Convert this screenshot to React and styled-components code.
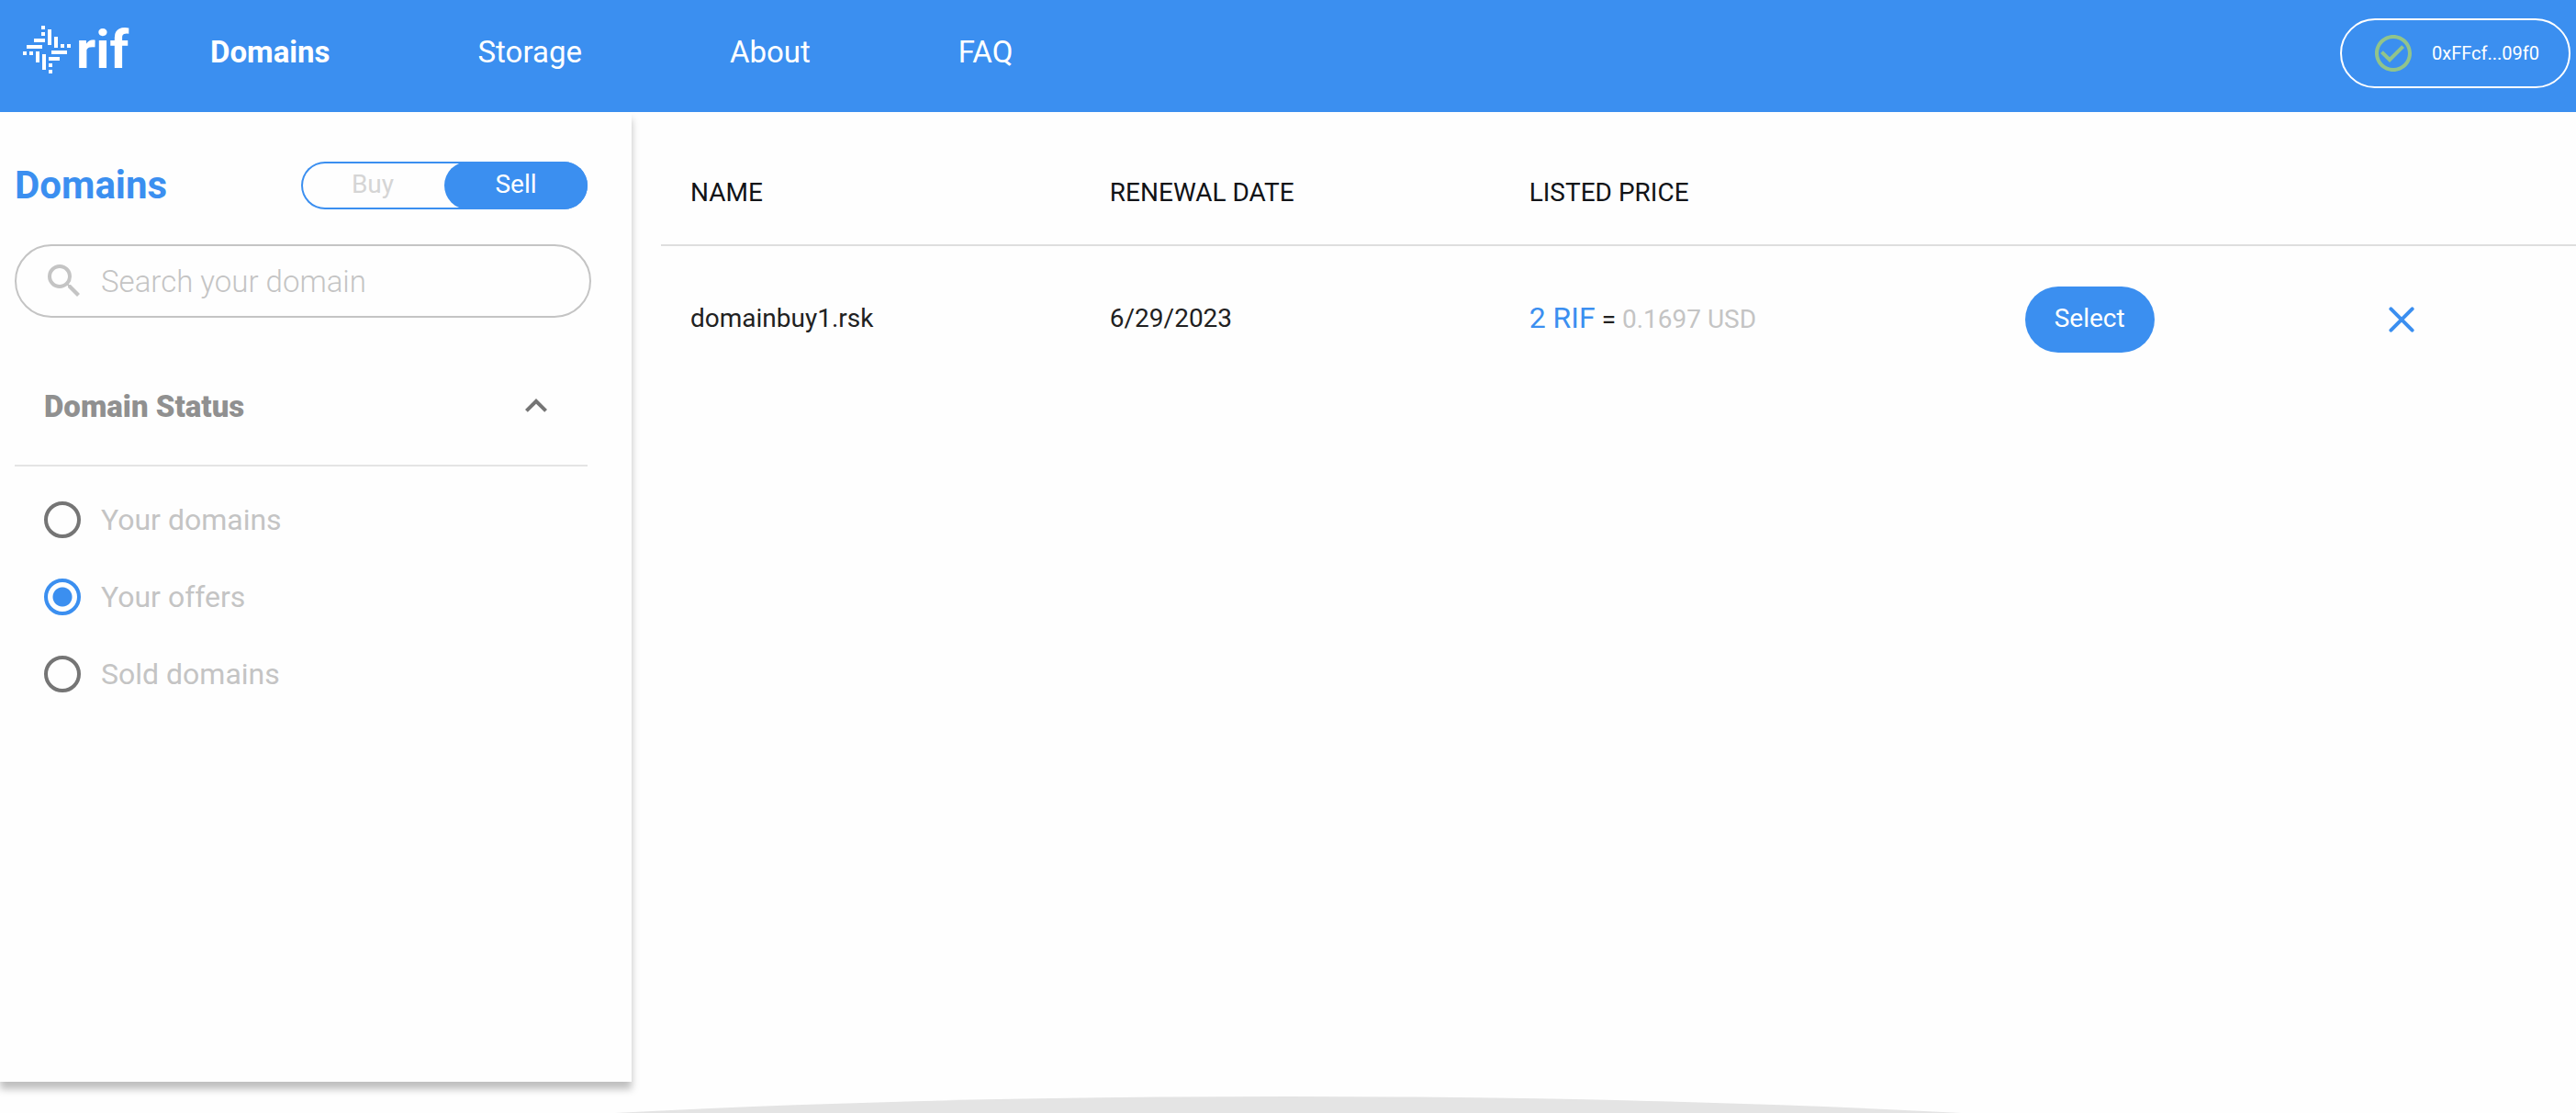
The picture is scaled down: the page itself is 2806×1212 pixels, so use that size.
import React, { useState } from "react";
import styled, { createGlobalStyle } from "styled-components";
import { MdCheckCircleOutline, MdExpandLess, MdSearch } from "react-icons/md";

const blue = "#3b8ff0";
const lightGray = "#c4c4c4";

const GlobalStyle = createGlobalStyle`
  *, *::before, *::after { box-sizing: border-box; }
  body {
    margin: 0;
    background: #fefefe;
    color: #212121;
    font-family: Roboto, "Liberation Sans", sans-serif;
    font-size: 28px;
    font-weight: 400;
  }
  button, input { font: inherit; color: inherit; }
`;

const Page = styled.div`
  display: flex;
  flex-direction: column;
  height: 100vh;
  overflow: hidden;
`;

const Header = styled.header`
  display: flex;
  align-items: center;
  padding: 20px 6px 26px 25px;
  background: ${blue};
  color: #fff;
`;

const Logo = styled.a`
  display: flex;
  align-items: center;
  gap: 6px;
  width: 204px;
  padding-bottom: 8px;
  color: inherit;
  text-decoration: none;
`;

const Wordmark = styled.span`
  font-size: 58px;
  font-weight: 700;
  line-height: 52px;
`;

const Nav = styled.nav`
  display: flex;
  flex: 1;
  gap: 161px;
  padding-bottom: 2px;
`;

const NavLink = styled.a`
  color: inherit;
  font-size: 33px;
  font-weight: ${(p) => (p.$active ? 700 : 400)};
  line-height: 40px;
  text-decoration: none;
`;

const AccountButton = styled.button`
  display: flex;
  align-items: center;
  gap: 18px;
  height: 76px;
  padding: 0 32px;
  border: 2px solid #fff;
  border-radius: 38px;
  background: transparent;
  font-size: 20px;

  svg { color: #91c48b; }
`;

const Body = styled.div`
  display: flex;
  flex: 1;
  min-height: 0;
`;

const Sidebar = styled.aside`
  flex: 0 0 688px;
  padding: 54px 44px 0 16px;
  box-shadow: 0 8px 8px rgba(0, 0, 0, 0.25);
`;

const SidebarTop = styled.div`
  display: flex;
  align-items: center;
  justify-content: space-between;
  padding-right: 4px;
`;

const Title = styled.h1`
  margin: 0;
  color: ${blue};
  font-size: 42px;
  font-weight: 700;
  line-height: 52px;
`;

const Toggle = styled.div`
  display: flex;
  width: 312px;
  height: 52px;
  border-radius: 26px;
  box-shadow: inset 0 0 0 2px ${blue};
`;

const ToggleOption = styled.button`
  flex: 1;
  padding: 0 0 4px;
  border: 0;
  border-radius: 26px;
  background: ${(p) => (p.$active ? blue : "transparent")};
  color: ${(p) => (p.$active ? "#fff" : "#d5d5d5")};
`;

const SearchBox = styled.label`
  display: flex;
  align-items: center;
  gap: 16px;
  height: 80px;
  margin-top: 38px;
  padding: 0 28px;
  border: 2px solid ${lightGray};
  border-radius: 40px;
  color: ${lightGray};
`;

const SearchInput = styled.input`
  flex: 1;
  min-width: 0;
  padding: 0;
  border: 0;
  outline: 0;
  background: transparent;
  color: #212121;
  font-size: 33px;
  font-weight: 300;

  &::placeholder { color: ${lightGray}; opacity: 1; }
`;

const Section = styled.section`
  padding-right: 4px;
`;

const SectionToggle = styled.button`
  display: flex;
  align-items: center;
  justify-content: space-between;
  width: 100%;
  margin-top: 30px;
  padding: 42px 32px 40px;
  border: 0;
  border-bottom: 2px solid #e4e4e4;
  background: transparent;
  color: #909090;
  font-size: 33px;
  font-weight: 900;

  svg { color: #757575; }
`;

const Options = styled.fieldset`
  display: grid;
  gap: 44px;
  margin: 0;
  padding: 38px 32px 0;
  border: 0;
`;

const Option = styled.label`
  display: flex;
  align-items: center;
  gap: 22px;
  color: ${lightGray};
  font-size: 32px;
  line-height: 40px;
`;

const Radio = styled.input`
  appearance: none;
  width: 40px;
  height: 40px;
  margin: 0;
  border: 4px solid #757575;
  border-radius: 50%;

  &:checked {
    border-color: ${blue};
    background: radial-gradient(circle, ${blue} 0 10px, transparent 11px);
  }
`;

const Main = styled.main`
  flex: 1;
  min-width: 0;
  padding: 30px 0 0 32px;
`;

const Table = styled.table`
  width: 100%;
  border-collapse: separate;
  border-spacing: 0;
  table-layout: fixed;
`;

const Column = styled.col`
  width: ${(p) => p.$width};
`;

const HeadCell = styled.th`
  height: 116px;
  padding: 0 32px;
  border-bottom: 2px solid #dedede;
  font-weight: 400;
  text-align: left;
  color: #111317;
`;

const Cell = styled.td`
  height: 160px;
  padding: 0 32px 4px;
`;

const ActionCell = styled(Cell)`
  padding: 0;
  text-align: center;
`;

const LastCell = styled(ActionCell)`
  padding-right: 36px;
`;

const Amount = styled.span`
  color: ${blue};
  font-size: 32px;
`;

const Fiat = styled.span`
  color: ${lightGray};
`;

const SelectButton = styled.button`
  height: 72px;
  padding: 0 32px 4px;
  border: 0;
  border-radius: 36px;
  background: ${blue};
  color: #fff;
`;

const IconButton = styled.button`
  padding: 8px;
  border: 0;
  background: transparent;
  color: ${blue};

  svg { display: block; }
`;

const Footer = styled.footer`
  flex: 0 0 18px;
  margin-top: 16px;
  overflow: hidden;
`;

const FooterDome = styled.div`
  height: 122px;
  border-radius: 50% 50% 0 0 / 100% 100% 0 0;
  background: #e4e4e4;
`;

const logoBars = [
  [135, 84, 12, 12], [135, 105, 12, 12], [156, 96, 12, 51], [111, 126, 36, 12],
  [177, 120, 12, 36], [87, 147, 51, 12], [198, 144, 12, 12], [219, 144, 12, 12],
  [75, 168, 12, 12], [96, 168, 12, 12], [168, 165, 51, 12], [117, 168, 12, 36],
  [159, 186, 36, 12], [138, 177, 12, 51], [159, 207, 12, 12], [159, 228, 12, 12],
];

function LogoMark() {
  return (
    <svg width="52" height="52" viewBox="75 84 156 156" fill="currentColor" aria-hidden="true">
      {logoBars.map(([x, y, width, height]) => (
        <rect key={`${x}-${y}`} x={x} y={y} width={width} height={height} />
      ))}
    </svg>
  );
}

function CloseIcon() {
  return (
    <svg width="28" height="28" viewBox="0 0 28 28" stroke="currentColor" strokeWidth="4" strokeLinecap="round" aria-hidden="true">
      <path d="M2.4 2.4l23.2 23.2M25.6 2.4L2.4 25.6" />
    </svg>
  );
}

const navItems = ["Domains", "Storage", "About", "FAQ"];
const modes = ["Buy", "Sell"];
const statuses = ["Your domains", "Your offers", "Sold domains"];
const offers = [
  { name: "domainbuy1.rsk", renewal: "6/29/2023", price: "2 RIF", fiat: "0.1697 USD" },
];

export default function App() {
  const [mode, setMode] = useState("Sell");
  const [status, setStatus] = useState("Your offers");
  const [open, setOpen] = useState(true);

  return (
    <Page>
      <GlobalStyle />
      <Header>
        <Logo href="#home">
          <LogoMark />
          <Wordmark>rif</Wordmark>
        </Logo>
        <Nav>
          {navItems.map((item) => (
            <NavLink key={item} href={`#${item.toLowerCase()}`} $active={item === "Domains"}>
              {item}
            </NavLink>
          ))}
        </Nav>
        <AccountButton type="button">
          <MdCheckCircleOutline size={48} />
          0xFFcf...09f0
        </AccountButton>
      </Header>
      <Body>
        <Sidebar>
          <SidebarTop>
            <Title>Domains</Title>
            <Toggle role="group">
              {modes.map((m) => (
                <ToggleOption
                  key={m}
                  type="button"
                  $active={m === mode}
                  aria-pressed={m === mode}
                  onClick={() => setMode(m)}
                >
                  {m}
                </ToggleOption>
              ))}
            </Toggle>
          </SidebarTop>
          <SearchBox htmlFor="domain-search">
            <MdSearch size={48} />
            <SearchInput id="domain-search" type="text" placeholder="Search your domain" />
          </SearchBox>
          <Section>
            <SectionToggle type="button" aria-expanded={open} onClick={() => setOpen(!open)}>
              Domain Status
              <MdExpandLess size={48} />
            </SectionToggle>
            {open && (
              <Options>
                {statuses.map((s, i) => (
                  <Option key={s} htmlFor={`status-${i}`}>
                    <Radio
                      id={`status-${i}`}
                      type="radio"
                      name="status"
                      checked={s === status}
                      onChange={() => setStatus(s)}
                    />
                    {s}
                  </Option>
                ))}
              </Options>
            )}
          </Section>
        </Sidebar>
        <Main>
          <Table>
            <colgroup>
              <Column $width="21.9%" />
              <Column $width="21.9%" />
              <Column $width="21.9%" />
              <Column $width="17.8%" />
              <Column />
            </colgroup>
            <thead>
              <tr>
                <HeadCell>NAME</HeadCell>
                <HeadCell>RENEWAL DATE</HeadCell>
                <HeadCell>LISTED PRICE</HeadCell>
                <HeadCell />
                <HeadCell />
              </tr>
            </thead>
            <tbody>
              {offers.map((offer) => (
                <tr key={offer.name}>
                  <Cell>{offer.name}</Cell>
                  <Cell>{offer.renewal}</Cell>
                  <Cell>
                    <Amount>{offer.price}</Amount> = <Fiat>{offer.fiat}</Fiat>
                  </Cell>
                  <ActionCell>
                    <SelectButton type="button">Select</SelectButton>
                  </ActionCell>
                  <LastCell>
                    <IconButton type="button" aria-label="Cancel">
                      <CloseIcon />
                    </IconButton>
                  </LastCell>
                </tr>
              ))}
            </tbody>
          </Table>
        </Main>
      </Body>
      <Footer>
        <FooterDome />
      </Footer>
    </Page>
  );
}
